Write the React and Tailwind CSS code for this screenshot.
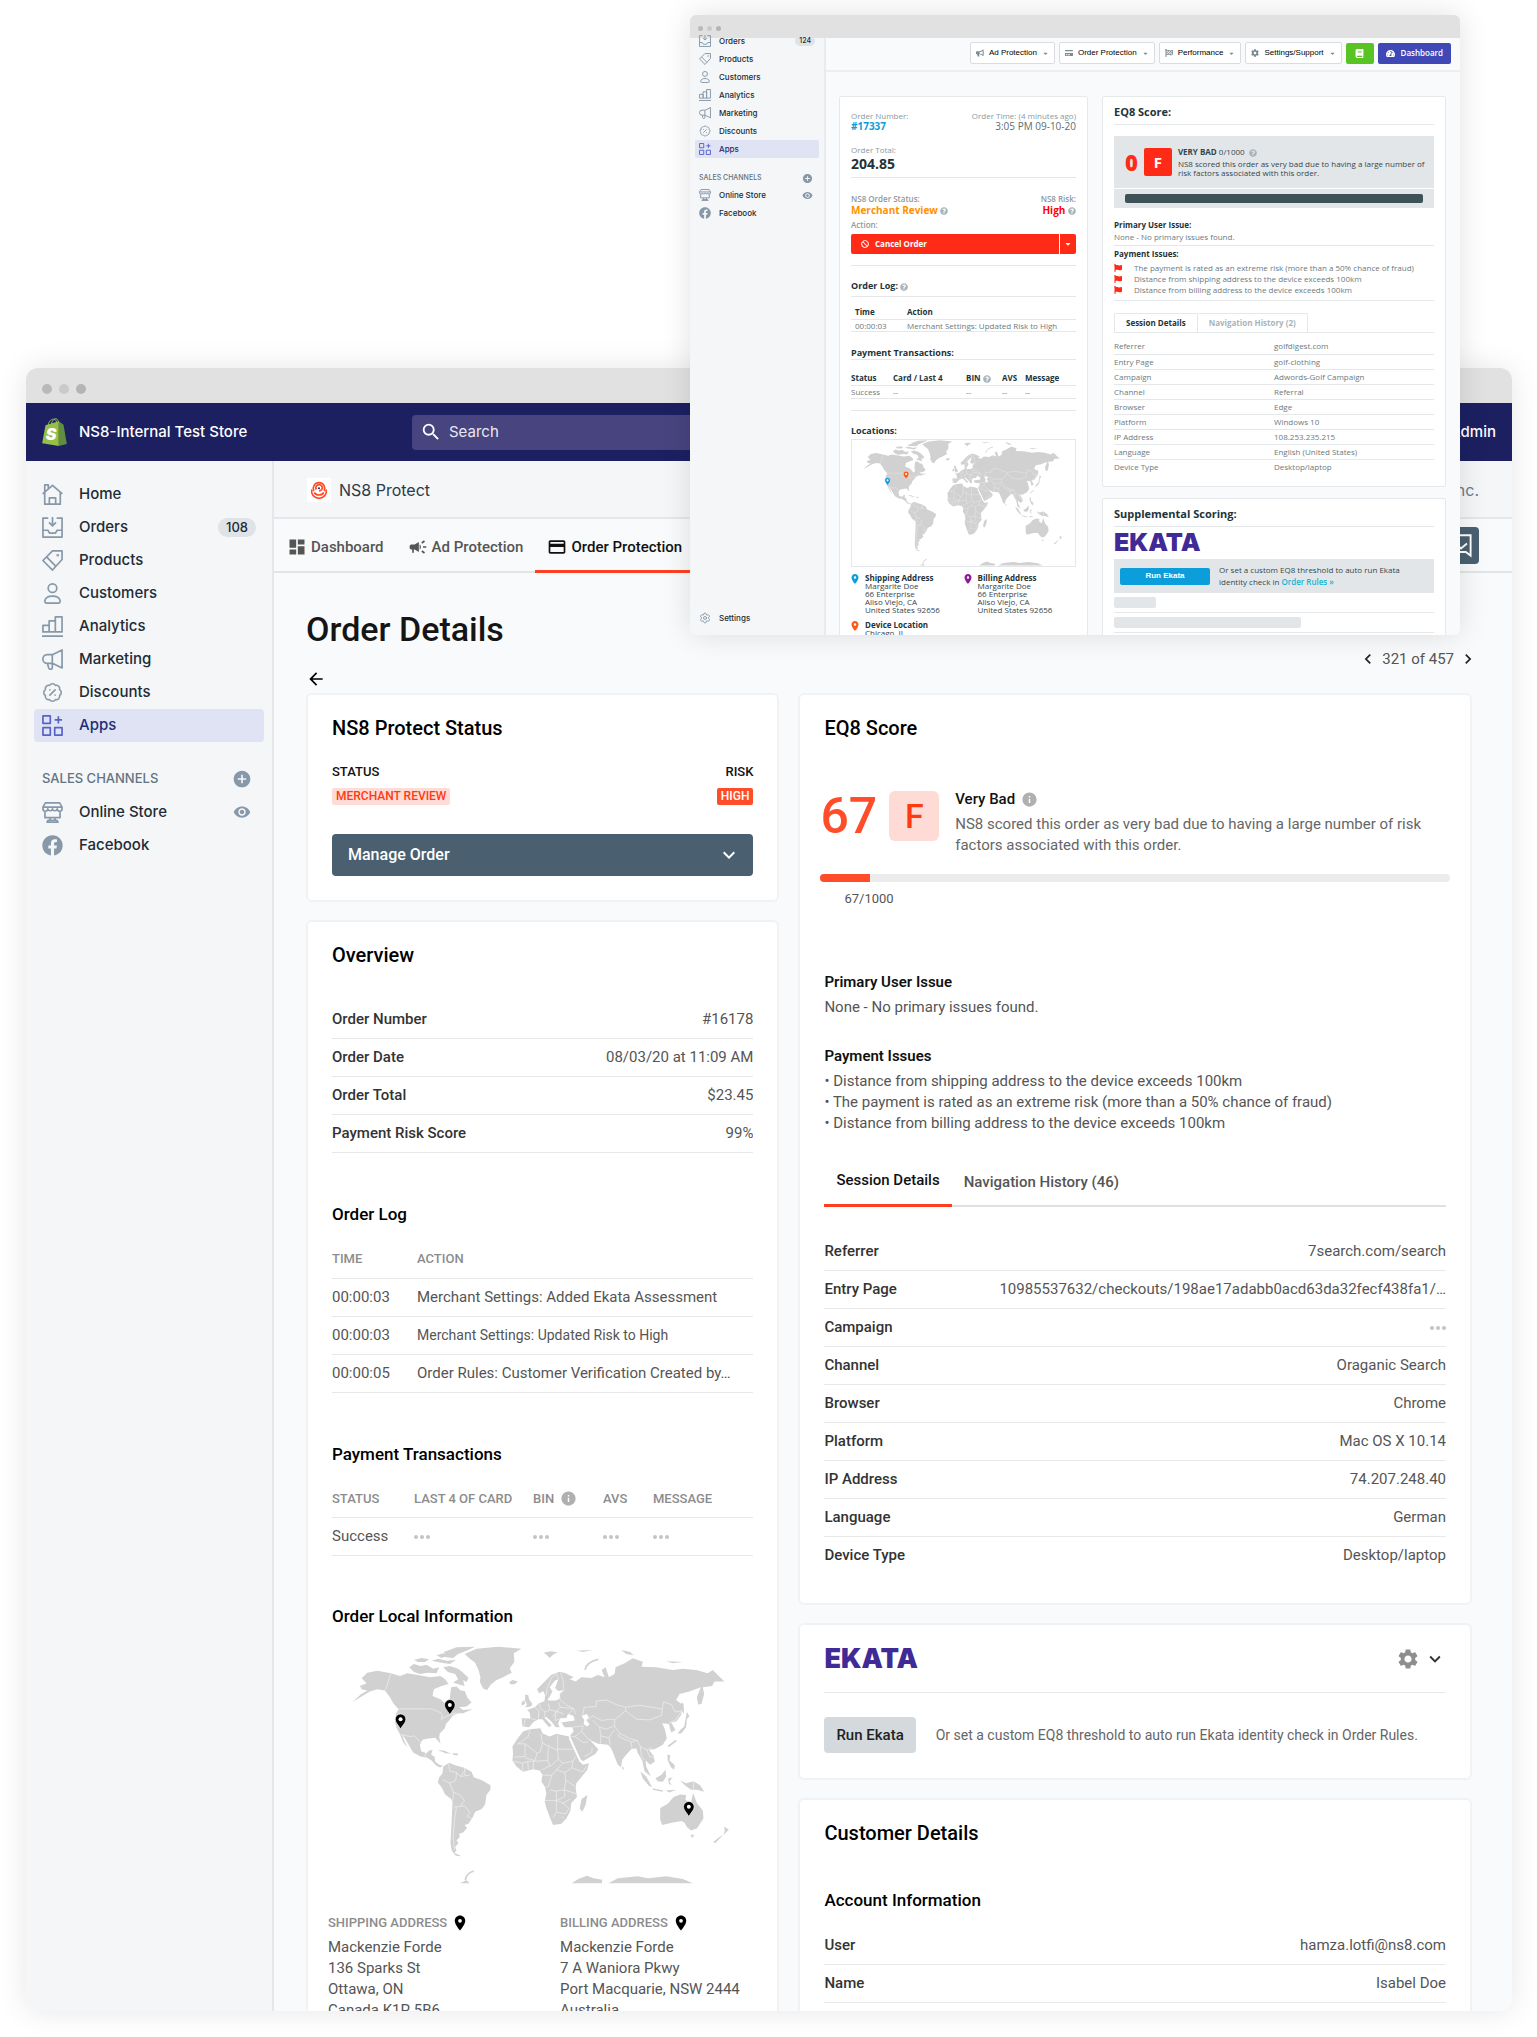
import React from "react";
import { BadgePercent, Settings } from "lucide-react";
import { FaFacebook, FaCog, FaFlag, FaBullhorn, FaTachometerAlt, FaBan, FaCaretDown, FaQuestionCircle, FaFlagCheckered, FaCreditCard, FaBook } from "react-icons/fa";
import {
  MdAddCircle, MdVisibility, MdDashboard, MdCampaign, MdPayment, MdArrowBack, MdInfo,
  MdSettings, MdKeyboardArrowDown, MdKeyboardArrowLeft, MdKeyboardArrowRight, MdLocationOn, MdSearch,
} from "react-icons/md";

const LineIcon = ({ className, children }) => (
  <svg viewBox="0 0 20 20" fill="none" stroke="currentColor" strokeWidth="1.6" strokeLinejoin="round" className={className} aria-hidden="true">
    {children}
  </svg>
);

const HomeIcon = ({ className }) => (
  <LineIcon className={className}>
    <path d="M2.6 8.4v10.8h14.8V8.4M.6 9.4 10 1.2l9.4 8.2M2.6 7.4V.9H6v3.4M7 19v-5.8h6V19" />
  </LineIcon>
);

const OrdersIcon = ({ className }) => (
  <LineIcon className={className}>
    <path d="M6 1H.9v18.1h18.2V1H14M1 12.6h4.6l1.6 2.8h5.6l1.6-2.8H19M10 0v8.2M6.7 5.2 10 8.4l3.3-3.2" />
  </LineIcon>
);

const ProductsIcon = ({ className }) => (
  <LineIcon className={className}>
    <path d="M10 .9h9.1V9L10 19.1.9 10zM4.4 6.6l8.8 9" />
    <circle cx="15" cy="5" r="0.5" />
  </LineIcon>
);

const CustomersIcon = ({ className }) => (
  <LineIcon className={className}>
    <circle cx="10" cy="4.9" r="4.1" />
    <path d="M2.7 17.2c.4-3 3.5-4.7 7.3-4.7s6.9 1.7 7.3 4.7c.1 1-.6 1.9-1.6 1.9H4.3c-1 0-1.7-.9-1.6-1.9z" />
  </LineIcon>
);

const AnalyticsIcon = ({ className }) => (
  <LineIcon className={className}>
    <path d="M.9 8.9h5.9v6.3H.9zM6.8 4.7h5.9v10.5H6.8zM12.7.9h6.4v14.3h-6.4zM0 19.1h20" />
  </LineIcon>
);

const MarketingIcon = ({ className }) => (
  <LineIcon className={className}>
    <path d="M19.1.9v17.2l-8.7-4.4H5a4.2 4.2 0 0 1 0-8.4h5.4zM9.8 5.3v12.5c0 .8-.5 1.3-1.2 1.3h-1c-.6 0-1-.4-1.2-1L5.2 13.7" />
  </LineIcon>
);

const AppsIcon = ({ className }) => (
  <LineIcon className={className}>
    <path d="M.9.9h7v7h-7zM.9 12.1h7v7h-7zM12.1 12.1h7v7h-7zM15.6 1.2v7M12.1 4.7h7" />
  </LineIcon>
);

const StoreIcon = ({ className }) => (
  <LineIcon className={className}>
    <path d="M3.2.9h13.6l2.3 4v1.6a2.3 2.3 0 0 1-4.6 0 2.3 2.3 0 0 1-4.5 0 2.3 2.3 0 0 1-4.5 0 2.3 2.3 0 0 1-4.6 0V4.9zM.9 4.9h18.2M2.8 8.8v6h14.4v-6M7.6 14.8v2.6M12.4 14.8v2.6M4.8 19.1c.2-1.2.8-1.7 1.8-1.7h6.8c1 0 1.6.5 1.8 1.7z" />
  </LineIcon>
);

const DiscountsIcon = ({ className }) => <BadgePercent strokeWidth={1.8} className={className} />;

const ShopifyLogo = () => (
  <svg viewBox="0 0 74 84" className="w-[25px] h-7 shrink-0" aria-hidden="true">
    <path d="M10 22 50 10 50 84 0 76z" fill="#95bf47" />
    <path d="M50 10 64 20 74 78 50 84z" fill="#5e8e3e" />
    <path d="M18 22C20 8 29 2 36 4s8 8 7 14M27 20C29 8 38-2 45 4c3 3 4 6 4 10" fill="none" stroke="#95bf47" strokeWidth="3" />
    <text x="11" y="66" fill="#fff" className="font-['Inter',sans-serif] font-black italic text-[48px]">S</text>
  </svg>
);

const Ns8Logo = () => (
  <svg viewBox="0 0 24 24" className="size-6 bg-white" fill="none" stroke="#ff4d29" strokeWidth="1.7" aria-hidden="true">
    <path d="M6.8 13A5.8 5.8 0 1 1 17.2 13" />
    <path d="M4.8 11.5C3.8 16 7 20.300 12 20.300s8.200-4.300 7.200-8.800" />
    <path d="M9.300 11.500A3.200 3.200 0 1 1 14.800 11.500c-.7 1-1.800 1.400-2.800 1.400M7.200 14.500c2 3.300 7.600 3.300 9.600 0" />
    <circle cx="12" cy="10.300" r="1" fill="#1c2260" stroke="none" />
  </svg>
);

const LAND =
  "M215 265 232 248 262 242 303 250 330 258 352 250 380 254 420 262 452 258 466 268 476 282 455 288 432 298 428 318 452 328 468 342 473 352 484 345 480 322 484 292 500 290 512 302 525 303 532 322 545 338 530 350 508 352 520 360 548 358 520 370 505 370 490 376 478 392 468 402 465 415 450 430 448 442 452 462 444 452 436 444 415 446 398 450 390 465 394 484 410 490 418 482 428 480 424 495 434 500 436 515 448 525 460 528 450 533 438 526 425 512 410 503 392 500 370 488 358 468 345 445 336 434 344 455 353 473 340 458 331 435 322 418 316 400 318 372 326 358 310 340 300 322 285 302 262 298 240 305 215 320 188 336 212 314 232 302 215 298 210 288 230 280z" +
  "M358 232 372 222 392 228 410 224 430 236 448 232 440 250 415 248 390 252 372 246zM372 210 395 204 418 208 405 216 385 216zM425 212 445 206 470 212 498 210 480 222 455 218zM440 196 460 190 472 198 455 204zM462 186 500 172 556 170 530 182 505 192 490 204 468 202zM460 232 480 228 505 236 520 248 536 264 530 276 520 270 524 288 508 284 490 278 505 268 496 252 474 246zM440 270 455 262 470 276 455 280z" +
  "M525 192 560 176 625 170 695 176 672 190 674 215 660 235 666 248 640 262 618 272 602 285 592 300 580 296 570 276 572 262 566 240 556 218 540 206zM658 277 668 270 684 275 676 282 664 284zM444 481 462 482 484 492 468 490zM488 490 506 491 502 497 490 495z" +
  "M460 530 478 519 496 526 523 534 545 546 552 562 578 572 602 586 602 600 590 616 586 644 576 658 556 666 548 684 536 702 524 706 532 714 520 728 508 732 510 742 500 752 506 760 496 772 500 782 494 790 516 800 498 798 486 784 482 760 484 720 486 680 488 640 484 628 466 614 456 594 444 578 448 562 458 550z" +
  "M700 425 720 418 752 415 758 430 780 440 800 432 838 440 845 455 858 485 870 515 880 525 898 520 893 540 875 562 860 580 858 595 862 622 845 640 842 664 830 686 815 702 790 706 780 682 770 655 765 635 770 610 765 590 755 575 758 555 750 542 730 538 700 546 680 530 668 512 670 490 668 470 682 448zM893 616 888 645 878 666 870 656 876 628z" +
  "M698 410 696 385 722 386 720 368 712 360 735 352 748 340 764 334 766 318 774 318 776 332 800 332 812 324 810 310 824 300 806 303 796 294 806 268 796 272 780 292 788 305 778 324 768 322 762 304 748 310 742 298 762 278 785 254 810 245 828 250 852 262 840 268 858 275 875 262 905 264 925 255 945 262 936 240 948 232 958 262 975 252 978 232 1005 220 1030 205 1060 215 1056 230 1100 232 1150 240 1180 236 1220 240 1255 250 1270 240 1305 275 1275 275 1268 288 1240 292 1244 312 1236 342 1226 344 1222 322 1234 292 1200 305 1170 312 1160 330 1180 345 1175 375 1160 395 1145 398 1158 420 1145 428 1138 402 1118 400 1126 418 1132 445 1120 465 1095 478 1078 480 1092 498 1096 515 1082 525 1068 512 1070 530 1084 560 1065 544 1058 512 1045 490 1040 475 1025 478 1010 495 998 510 994 532 984 524 974 498 964 474 955 465 925 462 900 450 926 478 918 492 880 514 870 506 858 478 845 452 842 436 852 425 848 412 825 412 815 398 855 392 852 378 835 372 830 384 812 385 805 400 810 412 798 412 785 395 768 380 765 384 786 406 778 412 758 388 745 388 730 398 718 412z" +
  "M706 314 716 316 718 328 728 342 724 350 706 352 712 344 706 332zM695 338 704 330 706 342 696 347zM762 188 782 184 804 187 790 194 780 204 772 196zM1192 366 1200 378 1192 388 1190 412 1176 430 1164 432 1172 420 1184 410 1188 388zM1176 336 1182 342 1184 372 1176 362zM995 180 1022 186 1032 196 1010 192zM1130 214 1180 216 1150 220zM860 182 910 180 880 186z" +
  "M1052 545 1070 560 1088 592 1078 588 1060 566zM1088 595 1122 602 1118 606 1090 600zM1098 565 1116 555 1128 540 1130 560 1120 576 1104 574zM1136 566 1150 562 1140 574 1146 586 1138 582zM1172 572 1190 580 1212 574 1232 586 1244 606 1222 600 1205 600 1186 586zM1134 494 1142 496 1140 512 1156 526 1154 540 1144 532 1134 510zM996 530 1003 534 1000 542zM1128 602 1160 600 1140 608z" +
  "M1112 655 1135 642 1152 622 1172 614 1190 616 1188 630 1204 640 1211 610 1222 640 1240 662 1242 686 1222 716 1205 722 1192 712 1186 700 1176 694 1150 698 1118 706 1112 690zM1203 735 1215 735 1208 745zM1304 710 1318 720 1302 736 1306 724zM1302 734 1278 760 1271 757 1290 742z" +
  "M846 881 866 868 892 858 912 866 938 870 936 881zM956 881 985 866 1045 860 1075 866 1130 860 1180 868 1210 881zM510 881 530 872 540 881z";

const BORDERS =
  "M303 250 287 300M320 357H425L452 368 458 376 454 388 472 378 500 368M333 434 360 440 374 438 392 458M408 490 404 500" +
  "M476 522 480 544 500 548 512 560 526 540M500 548 498 572 480 580 460 570M512 560 540 556M524 534 526 556M480 580 490 606 512 616 524 634 510 650 492 652M492 606 488 636M510 650 524 648 540 668 532 680 546 686M500 652 494 690 490 740 494 780" +
  "M720 418 716 440 684 462M684 462 706 462 706 500 672 502M706 462 742 490 752 486 758 460 754 432M742 490 736 512 706 504M758 460 776 468 804 482V436M804 478H850M776 468 774 512 740 514M804 482 806 508 786 526 756 540M774 512 780 528M806 508 820 520 850 514 858 500M850 514 846 534 880 546 890 530M820 520 800 540 826 548 846 534M826 548 828 572 858 590M756 556H786L800 540M786 556 776 590 766 594M828 572 824 600 800 604 780 600M824 600 860 612M824 600 826 620 800 632H766M800 604 800 668 790 684M800 632 820 640 842 628M820 640 838 656 828 672 802 668M700 546 698 520 672 514M716 540 714 514M730 538 732 514M698 520 720 514 740 514M816 682 822 684" +
  "M702 412 706 388M722 386 740 390M735 352 748 362 746 386M748 340 752 356 766 366 780 360 800 364 812 352 806 336M766 366 764 380M780 360 776 340M790 380 800 364 822 372M800 364 796 392 812 386M812 352 850 356 838 372M806 268 800 250 786 262 772 296 770 316M812 248 820 270 822 300M820 304 806 318 812 330 830 345 852 356 858 372" +
  "M878 378 884 352 920 350 920 334 950 330 980 344 1008 352 1008 362 976 390 960 388 936 392 908 378 896 388M1008 352 1050 346 1100 354 1118 358 1116 376 1080 390 1040 388 1008 362M1118 358 1122 336 1146 344 1156 366 1178 362 1158 390 1138 400M976 390 974 408 990 430 1020 446 1044 452 1052 470 1072 480 1086 474M974 408 950 418 930 412 910 392M930 412 934 438 958 444 974 420M934 438 932 462M958 444 962 466M848 412 880 408 876 424 892 444 904 452M876 424 856 440 846 440M856 440 880 458 896 456M884 500 906 488 908 474M990 430 986 440 1024 456 1044 452M1024 456 1028 478M1052 470 1056 500 1066 512M1072 480 1080 500 1092 502M1212 576V600";

const PIN = "M0 0C-9-14-16-20-16-29A16 16 0 1 1 16-29C16-20 9-14 0 0z";

function WorldMap({ pins, className }) {
  return (
    <svg viewBox="126 168 1266 714" className={className} aria-hidden="true">
      <path d={LAND} fill="#d1d1d1" />
      <path d="M886 240Q890 216 926 208M526 872Q530 850 552 844M1160 452 1136 470" fill="none" stroke="#d1d1d1" strokeWidth="5" />
      <path d={BORDERS} fill="none" stroke="#f1f1f1" strokeWidth="2" strokeLinejoin="round" />
      <path d="M876 378 892 372 898 384 890 390 900 404 892 410 882 402 884 390z" fill="#fff" />
      <path d="M840 444 872 514" stroke="#fff" strokeWidth="6" />
      {pins.map((p, i) => (
        <g key={i} transform={`translate(${p.x} ${p.y})`}>
          <path d={PIN} fill={p.color} stroke="#fff" strokeWidth="2" />
          <circle cx="0" cy="-29" r="6" fill="#fff" />
        </g>
      ))}
    </svg>
  );
}

const NAV = [
  { label: "Home", icon: HomeIcon },
  { label: "Orders", icon: OrdersIcon, count: true },
  { label: "Products", icon: ProductsIcon },
  { label: "Customers", icon: CustomersIcon },
  { label: "Analytics", icon: AnalyticsIcon },
  { label: "Marketing", icon: MarketingIcon },
  { label: "Discounts", icon: DiscountsIcon },
  { label: "Apps", icon: AppsIcon, active: true },
];

function Sidebar() {
  return (
    <aside className="w-[248px] shrink-0 bg-[#f4f6f8] border-r-2 border-[#e4e7eb] pt-[17px] pl-2 pr-2 font-['Inter',sans-serif] text-[15px] font-medium text-[#212b36]">
      <nav>
        {NAV.map(({ label, icon: Icon, count, active }) => (
          <a key={label} href="#" className={active ? "flex items-center h-[33px] px-2 rounded bg-[#dfe3f3] text-[#202e78]" : "flex items-center h-[33px] px-2"}>
            <Icon className={active ? "size-[21px] mr-4 text-[#5563c9]" : "size-[21px] mr-4 text-[#8798a8]"} />
            {label}
            {count && <span className="ml-auto h-[19px] px-2 rounded-full bg-[#dfe3e8] text-[13px] leading-[19px]">108</span>}
          </a>
        ))}
      </nav>
      <div className="flex items-center justify-between h-8 mt-[21px] px-2 text-[13px] text-[#637381]">
        <h2>SALES CHANNELS</h2>
        <button aria-label="Add sales channel" className="mr-1 text-[#8798a8]"><MdAddCircle className="size-5" /></button>
      </div>
      <a href="#" className="flex items-center h-[34px] px-2">
        <StoreIcon className="size-[21px] mr-4 text-[#8798a8]" />
        Online Store
        <MdVisibility className="size-[18px] ml-auto mr-[5px] text-[#8798a8]" />
      </a>
      <a href="#" className="flex items-center h-[33px] px-2">
        <FaFacebook className="size-[21px] mr-4 text-[#8798a8]" />
        Facebook
      </a>
    </aside>
  );
}

const Card = ({ className = "", children }) => (
  <section className={`bg-white border-2 border-[#f0f2f4] rounded-md px-6 ${className}`}>{children}</section>
);

const Dots = () => (
  <svg viewBox="0 0 16 4" className="inline-block w-4 h-1" role="img" aria-label="No value">
    <circle cx="2" cy="2" r="2" fill="#c4c4c4" />
    <circle cx="8" cy="2" r="2" fill="#c4c4c4" />
    <circle cx="14" cy="2" r="2" fill="#c4c4c4" />
  </svg>
);

function KeyValueTable({ rows, lastBorder = true }) {
  return (
    <table className="w-full table-fixed">
      <tbody>
        {rows.map(([k, v]) => (
          <tr key={k} className={lastBorder ? "h-[38px] border-b border-[#e8e8e8]" : "h-[38px] border-b border-[#e8e8e8] last:border-0"}>
            <th scope="row" className="w-1/4 text-left font-medium text-[#333] whitespace-nowrap">{k}</th>
            <td className="text-right text-[#555] truncate">{v || <Dots />}</td>
          </tr>
        ))}
      </tbody>
    </table>
  );
}

const OVERVIEW = [
  ["Order Number", "#16178"],
  ["Order Date", "08/03/20 at 11:09 AM"],
  ["Order Total", "$23.45"],
  ["Payment Risk Score", "99%"],
];

const ORDER_LOG = [
  { time: "00:00:03", action: "Merchant Settings: Added Ekata Assessment" },
  { time: "00:00:03", action: "Merchant Settings: Updated Risk to High", small: true },
  { time: "00:00:05", action: "Order Rules: Customer Verification Created by…" },
];

const SESSION = [
  ["Referrer", "7search.com/search"],
  ["Entry Page", "10985537632/checkouts/198ae17adabb0acd63da32fecf438fa1/…"],
  ["Campaign", ""],
  ["Channel", "Oraganic Search"],
  ["Browser", "Chrome"],
  ["Platform", "Mac OS X 10.14"],
  ["IP Address", "74.207.248.40"],
  ["Language", "German"],
  ["Device Type", "Desktop/laptop"],
];

const ADDRESSES = [
  { title: "SHIPPING ADDRESS", lines: ["Mackenzie Forde", "136 Sparks St", "Ottawa, ON", "Canada K1P 5B6"] },
  { title: "BILLING ADDRESS", lines: ["Mackenzie Forde", "7 A Waniora Pkwy", "Port Macquarie, NSW 2444", "Australia"] },
];

const LOCAL_PINS = [
  { x: 332, y: 417, color: "#000" },
  { x: 480, y: 374, color: "#000" },
  { x: 1198, y: 680, color: "#000" },
];

function OverviewCard() {
  const head = "h-[38px] text-left font-medium text-[13px] text-[#8c8c8c]";
  return (
    <Card className="pt-[19px]">
      <h2 className="text-xl leading-7 font-medium text-black">Overview</h2>
      <div className="mt-8"><KeyValueTable rows={OVERVIEW} /></div>

      <h3 className="mt-[49px] text-[17px] leading-6 font-medium text-black">Order Log</h3>
      <table className="w-full table-fixed mt-[14px]">
        <thead>
          <tr className="border-b border-[#e8e8e8]">
            <th className={`${head} w-[85px]`}>TIME</th>
            <th className={head}>ACTION</th>
          </tr>
        </thead>
        <tbody>
          {ORDER_LOG.map((row, i) => (
            <tr key={i} className="h-[38px] border-b border-[#e8e8e8]">
              <td>{row.time}</td>
              <td className={row.small ? "truncate text-sm" : "truncate"}>{row.action}</td>
            </tr>
          ))}
        </tbody>
      </table>

      <h3 className="mt-[49px] text-[17px] leading-6 font-medium text-black">Payment Transactions</h3>
      <table className="w-full table-fixed mt-[14px]">
        <thead>
          <tr className="border-b border-[#e8e8e8] whitespace-nowrap">
            <th className={`${head} w-[82px]`}>STATUS</th>
            <th className={`${head} w-[119px]`}>LAST 4 OF CARD</th>
            <th className={`${head} w-[70px]`}>
              <span className="flex items-center gap-1.5">BIN <MdInfo className="size-[17px] text-[#b0b0b0]" /></span>
            </th>
            <th className={`${head} w-[50px]`}>AVS</th>
            <th className={head}>MESSAGE</th>
          </tr>
        </thead>
        <tbody>
          <tr className="h-[38px] border-b border-[#e8e8e8]">
            <td>Success</td>
            <td><Dots /></td>
            <td><Dots /></td>
            <td><Dots /></td>
            <td><Dots /></td>
          </tr>
        </tbody>
      </table>

      <h3 className="mt-12 text-[17px] leading-6 font-medium text-black">Order Local Information</h3>
      <WorldMap pins={LOCAL_PINS} className="w-full mt-[18px]" />
      <div className="grid grid-cols-[6fr_5fr] mt-[25px] -ml-1">
        {ADDRESSES.map((a) => (
          <address key={a.title} className="not-italic leading-[21px] whitespace-nowrap">
            <div className="flex items-center gap-1 h-7 text-[13px] font-medium text-[#8c8c8c]">
              {a.title}
              <MdLocationOn className="size-[18px] text-black" />
            </div>
            {a.lines.map((l) => <p key={l}>{l}</p>)}
          </address>
        ))}
      </div>
    </Card>
  );
}

function ScoreCard() {
  return (
    <Card className="pt-[19px] pb-[29px]">
      <h2 className="text-xl leading-7 font-medium text-black">EQ8 Score</h2>
      <div className="flex items-start mt-[49px] -ml-1">
        <div className="text-[50px] leading-[50px] font-medium text-[#ff4d29]">67</div>
        <div className="flex items-center justify-center size-[50px] ml-3 rounded-md bg-[#ffdbd5] text-[34px] font-medium text-[#ff3a12]">F</div>
        <div className="flex-1 ml-4 leading-[21px] text-[#666]">
          <p className="flex items-center gap-1.5 mb-1.5 leading-[17px] font-medium text-[#111]">
            Very Bad <MdInfo className="size-[17px] text-[#b0b0b0]" />
          </p>
          <p>NS8 scored this order as very bad due to having a large number of risk factors associated with this order.</p>
        </div>
      </div>
      <div className="h-2 mt-[18px] -mx-1 rounded-full bg-[#ececec] overflow-hidden">
        <div className="h-full bg-[#ff4d29]" style={{ width: "7.8%" }} />
      </div>
      <p className="mt-[9px] ml-5 text-[13px] leading-4">67/1000</p>

      <h3 className="mt-[65px] text-[15px] leading-[21px] font-semibold text-[#111]">Primary User Issue</h3>
      <p className="mt-1 leading-[21px]">None - No primary issues found.</p>
      <h3 className="mt-7 text-[15px] leading-[21px] font-semibold text-[#111]">Payment Issues</h3>
      <ul className="mt-1 leading-[21px]">
        <li>• Distance from shipping address to the device exceeds 100km</li>
        <li>• The payment is rated as an extreme risk (more than a 50% chance of fraud)</li>
        <li>• Distance from billing address to the device exceeds 100km</li>
      </ul>

      <div role="tablist" className="flex mt-[23px] border-b-2 border-[#e0e0e0] font-medium">
        <button role="tab" aria-selected="true" className="h-[50px] -mb-0.5 px-3 border-b-3 border-[#ff4020] text-[#111]">Session Details</button>
        <button role="tab" aria-selected="false" className="h-[50px] -mb-0.5 px-3">Navigation History (46)</button>
      </div>
      <div className="mt-[25px]"><KeyValueTable rows={SESSION} lastBorder={false} /></div>
    </Card>
  );
}

function MainWindow() {
  return (
    <div className="flex flex-col h-full rounded-xl overflow-hidden bg-[#f9fafb] shadow-[0_0_30px_rgba(0,0,0,0.1)] font-['Roboto',sans-serif] text-[15px] text-[#555]">
      <div className="flex items-center gap-[7px] h-[35px] shrink-0 pt-1.5 pl-4 bg-[#e1e1e1]">
        <span className="size-2.5 rounded-full bg-[#b9b9b9]" />
        <span className="size-2.5 rounded-full bg-[#cacaca]" />
        <span className="size-2.5 rounded-full bg-[#b4b4b4]" />
      </div>
      <header className="flex items-center h-[58px] shrink-0 px-4 bg-[#1c2061] text-white font-['Inter',sans-serif] text-[15px] font-medium">
        <ShopifyLogo />
        <span className="ml-3 w-[333px]">NS8-Internal Test Store</span>
        <label className="flex items-center flex-1 max-w-[700px] h-[35px] px-2 rounded bg-[#47447f]">
          <MdSearch className="size-[22px]" />
          <input type="search" aria-label="Search" placeholder="Search" className="flex-1 ml-[7px] bg-transparent font-normal placeholder:text-[#e8e8f2] outline-none" />
        </label>
        <span className="ml-auto">Admin</span>
      </header>
      <div className="flex flex-1 min-h-0">
        <Sidebar />
        <main className="flex-1 min-w-0">
          <div className="flex items-center h-[58px] pt-0.5 pl-[33px] pr-[33px] bg-[#f4f6f8] border-b-2 border-[#e4e7eb] font-['Inter',sans-serif] text-base text-[#2e3a47]">
            <Ns8Logo />
            <span className="ml-2">NS8 Protect</span>
            <span className="ml-auto text-[#6b7a88]">by NS8 Inc.</span>
          </div>
          <nav className="flex h-[54px] pl-px pr-[33px] border-b-2 border-[#e2e4e6] font-medium">
            <a href="#" className="flex items-center gap-1 h-[54px] px-3 pt-0.5"><MdDashboard className="size-5 text-[#555]" />Dashboard</a>
            <a href="#" className="flex items-center gap-1 h-[54px] px-3 pt-0.5"><MdCampaign className="size-5 text-[#555]" />Ad Protection</a>
            <a href="#" className="flex items-center gap-1 h-[54px] px-3 pt-[5px] border-b-3 border-[#ff4020] text-[#111]"><MdPayment className="size-5" />Order Protection</a>
            <button aria-label="Bookmark" className="flex items-center justify-center size-[37px] mt-2 ml-auto rounded bg-[#4a6070]">
              <svg viewBox="0 0 20 20" className="size-6" fill="none" stroke="#fff" strokeWidth="1.6" aria-hidden="true">
                <path d="M2 1h16v17l-4-3H2zM6 8l4 4 5-4" />
              </svg>
            </button>
          </nav>
          <div className="pl-8 pr-10 pt-9">
            <h1 className="text-[34px] leading-10 font-medium text-[#151515]">Order Details</h1>
            <div className="flex items-center justify-end h-5 -mr-1.5 text-[15px]">
              <button aria-label="Previous order"><MdKeyboardArrowLeft className="size-5 text-[#222]" /></button>
              <span className="mx-1">321 of 457</span>
              <button aria-label="Next order"><MdKeyboardArrowRight className="size-5 text-[#222]" /></button>
            </div>
            <button aria-label="Back" className="block"><MdArrowBack className="size-5 text-black" /></button>
            <div className="grid grid-cols-[473fr_673fr] gap-[19px] mt-1">
              <div className="flex flex-col gap-[18px] min-w-0">
                <Card className="pt-[19px] pb-6">
                  <h2 className="text-xl leading-7 font-medium text-black">NS8 Protect Status</h2>
                  <div className="flex justify-between mt-5 text-[13px] font-medium text-[#111]">
                    <div>
                      <h3 className="leading-5">STATUS</h3>
                      <span className="inline-block mt-1.5 px-1 rounded-xs bg-[#ffdbd5] text-xs leading-[17px] text-[#ff3a12]">MERCHANT REVIEW</span>
                    </div>
                    <div className="text-right">
                      <h3 className="leading-5">RISK</h3>
                      <span className="inline-block mt-1.5 px-1 rounded-xs bg-[#ff4d29] text-xs leading-[17px] text-white">HIGH</span>
                    </div>
                  </div>
                  <button className="flex items-center justify-between w-full h-[42px] mt-7 pl-4 pr-3 rounded bg-[#4a6070] text-base font-medium text-white">
                    Manage Order <MdKeyboardArrowDown className="size-6" />
                  </button>
                </Card>
                <OverviewCard />
              </div>
              <div className="flex flex-col gap-[18px] min-w-0">
                <ScoreCard />
                <Card className="pt-[19px] pb-[25px]">
                  <div className="flex items-center h-[30px]">
                    <span className="font-['Inter',sans-serif] text-[27px] leading-7 font-black text-[#3f2a96]">EKATA</span>
                    <button aria-label="Ekata settings" className="ml-auto"><MdSettings className="size-6 text-[#8e8e8e]" /></button>
                    <button aria-label="Collapse Ekata" className="ml-1"><MdKeyboardArrowDown className="size-[22px] text-[#333]" /></button>
                  </div>
                  <div className="flex items-center gap-5 mt-[18px] pt-6 border-t border-[#e8e8e8]">
                    <button className="h-9 px-3 rounded bg-[#d4d9de] font-medium text-[#222] whitespace-nowrap">Run Ekata</button>
                    <p className="text-sm text-[#666]">Or set a custom EQ8 threshold to auto run Ekata identity check in Order Rules.</p>
                  </div>
                </Card>
                <Card className="pt-[19px] pb-10">
                  <h2 className="text-xl leading-7 font-medium text-black">Customer Details</h2>
                  <h3 className="mt-[41px] mb-[14px] text-[17px] leading-6 font-medium text-black">Account Information</h3>
                  <KeyValueTable rows={[["User", "hamza.lotfi@ns8.com"], ["Name", "Isabel Doe"]]} />
                </Card>
              </div>
            </div>
          </div>
        </main>
      </div>
    </div>
  );
}

/* Previous version of the order screen, shown on top of the new one */

const MINI_MENUS = [
  { label: "Ad Protection", icon: FaBullhorn },
  { label: "Order Protection", icon: FaCreditCard },
  { label: "Performance", icon: FaFlagCheckered },
  { label: "Settings/Support", icon: FaCog },
];

const MINI_SESSION = [
  ["Referrer", "golfdigest.com"],
  ["Entry Page", "golf-clothing"],
  ["Campaign", "Adwords-Golf Campaign"],
  ["Channel", "Referral"],
  ["Browser", "Edge"],
  ["Platform", "Windows 10"],
  ["IP Address", "108.253.235.215"],
  ["Language", "English (United States)"],
  ["Device Type", "Desktop/laptop"],
];

const MINI_ADDRESSES = [
  { title: "Shipping Address", color: "text-[#0c9ddb]", lines: ["Margarite Doe", "66 Enterprise", "Aliso Viejo, CA", "United States 92656"] },
  { title: "Billing Address", color: "text-[#8d1a94]", lines: ["Margarite Doe", "66 Enterprise", "Aliso Viejo, CA", "United States 92656"] },
  { title: "Device Location", color: "text-[#ff5a12]", lines: ["Chicago, IL"] },
];

const MINI_PINS = [
  { x: 328, y: 426, color: "#0c9ddb" },
  { x: 433, y: 390, color: "#ff5a12" },
];

function MiniSidebar() {
  return (
    <aside className="flex flex-col w-[136px] shrink-0 bg-[#f4f6f8] border-r-2 border-[#e8ebef] px-[5px] pb-2 font-['Inter',sans-serif] text-[8px] font-medium text-[#212b36]">
      <nav className="-mt-1.5">
        {NAV.slice(1).map(({ label, icon: Icon, count, active }) => (
          <a key={label} href="#" className={active ? "flex items-center h-[18px] px-1 rounded-xs bg-[#dfe3f3] text-[#202e78]" : "flex items-center h-[18px] px-1"}>
            <Icon className={active ? "size-3 mr-2 text-[#5563c9]" : "size-3 mr-2 text-[#8798a8]"} />
            {label}
            {count && <span className="ml-auto px-1 rounded-full bg-[#dfe3e8] text-[7px] leading-[10px]">124</span>}
          </a>
        ))}
      </nav>
      <div className="flex items-center justify-between h-4 mt-3 px-1 text-[7px] text-[#637381]">
        <h2>SALES CHANNELS</h2>
        <MdAddCircle className="size-[11px] mr-0.5 text-[#8798a8]" />
      </div>
      <a href="#" className="flex items-center h-[18px] px-1">
        <StoreIcon className="size-3 mr-2 text-[#8798a8]" />
        Online Store
        <MdVisibility className="size-[11px] ml-auto mr-0.5 text-[#8798a8]" />
      </a>
      <a href="#" className="flex items-center h-[18px] px-1">
        <FaFacebook className="size-3 mr-2 text-[#8798a8]" />
        Facebook
      </a>
      <a href="#" className="flex items-center h-[18px] mt-auto px-1">
        <Settings strokeWidth={1.8} className="size-3 mr-2 text-[#8798a8]" />
        Settings
      </a>
    </aside>
  );
}

const Help = () => <FaQuestionCircle className="inline-block size-2 text-[#a9b4ba]" />;

function MiniOrderCard() {
  return (
    <section className="w-[249px] bg-white border border-[#e6e9ec] rounded-xs px-[11px] pt-[14px]">
      <div className="flex justify-between leading-[10px] text-[#8c999e]">
        <div>
          <p>Order Number:</p>
          <a href="#" className="block text-[10px] font-bold text-[#0c9ddb]">#17337</a>
        </div>
        <div className="text-right">
          <p>Order Time: (4 minutes ago)</p>
          <p className="text-[10px] text-[#5d6d73]">3:05 PM 09-10-20</p>
        </div>
      </div>
      <p className="mt-3.5 leading-[10px] text-[#8c999e]">Order Total:</p>
      <p className="pb-1 text-[14px] leading-[18px] font-bold text-[#22343a] border-b border-[#e4e8ea]">204.85</p>

      <div className="flex justify-between mt-4 leading-[10px] font-semibold text-[#8c999e]">
        <div>
          <p>NS8 Order Status:</p>
          <p className="text-[10px] leading-3 font-bold text-[#ff9100]">Merchant Review <Help /></p>
          <p className="mt-1">Action:</p>
        </div>
        <div className="text-right">
          <p>NS8 Risk:</p>
          <p className="text-[10px] leading-3 font-bold text-[#f00]">High <Help /></p>
        </div>
      </div>
      <div className="flex gap-px mt-1 h-5 text-white font-bold">
        <button className="flex items-center flex-1 pl-2.5 gap-1.5 rounded-l-xs bg-[#ff2b17]"><FaBan />Cancel Order</button>
        <button aria-label="More actions" className="flex items-center justify-center w-4 rounded-r-xs bg-[#ff2b17]"><FaCaretDown /></button>
      </div>

      <h3 className="mt-[11px] pt-3.5 pb-1 text-[9px] leading-3 font-bold text-[#22343a] border-y border-[#e4e8ea]">Order Log: <Help /></h3>
      <table className="w-full mt-2 leading-[11px]">
        <thead>
          <tr className="h-3.5 text-left text-[#22343a] border-b border-[#e4e8ea]">
            <th className="w-[56px] pl-1 font-bold">Time</th>
            <th className="font-bold">Action</th>
          </tr>
        </thead>
        <tbody>
          <tr className="border-b border-[#e4e8ea]">
            <td className="pl-1">00:00:03</td>
            <td>Merchant Settings: Updated Risk to High</td>
          </tr>
        </tbody>
      </table>

      <h3 className="mt-[15px] text-[9px] leading-3 font-bold text-[#22343a] border-b border-[#e4e8ea]">Payment Transactions:</h3>
      <table className="w-full table-fixed mt-3 leading-[12px]">
        <thead>
          <tr className="h-3.5 text-left text-[#22343a] whitespace-nowrap border-b border-[#e4e8ea]">
            <th className="w-[42px] font-bold">Status</th>
            <th className="w-[73px] font-bold">Card / Last 4</th>
            <th className="w-9 font-bold">BIN <Help /></th>
            <th className="w-[23px] font-bold">AVS</th>
            <th className="font-bold">Message</th>
          </tr>
        </thead>
        <tbody>
          <tr className="border-b border-[#e4e8ea]">
            <td>Success</td>
            <td>--</td>
            <td>--</td>
            <td>--</td>
            <td>--</td>
          </tr>
        </tbody>
      </table>

      <h3 className="mt-[11px] pt-3.5 pb-0.5 text-[9px] leading-3 font-bold text-[#22343a] border-t border-[#e4e8ea]">Locations:</h3>
      <div className="border border-[#e4e8ea]">
        <WorldMap pins={MINI_PINS} className="w-full" />
      </div>
      <div className="grid grid-cols-2 mt-1.5 gap-y-1.5 leading-[8px] text-[#33464c]">
        {MINI_ADDRESSES.map((a) => (
          <address key={a.title} className="flex gap-1 not-italic whitespace-nowrap">
            <MdLocationOn className={`size-3 -ml-0.5 ${a.color}`} />
            <div>
              <p className="font-bold text-[#22343a] leading-[9px]">{a.title}</p>
              {a.lines.map((l) => <p key={l}>{l}</p>)}
            </div>
          </address>
        ))}
      </div>
    </section>
  );
}

function MiniScoreCards() {
  return (
    <div className="flex flex-col gap-[11px] flex-1 min-w-0">
      <section className="bg-white border border-[#e6e9ec] rounded-xs px-[11px] pt-[7px] pb-3">
        <h2 className="pb-1 text-[11px] leading-4 font-bold text-[#22343a] border-b border-[#e4e8ea]">EQ8 Score:</h2>
        <div className="flex items-center h-[52px] mt-[11px] pl-[11px] bg-[#e3e6e9]">
          <span className="text-[22px] font-extrabold text-[#ff2b17]">0</span>
          <span className="flex items-center justify-center size-7 shrink-0 ml-1.5 rounded-xs bg-[#ff2b17] text-[15px] font-bold text-white">F</span>
          <div className="ml-1.5 pr-1 leading-[9px] text-[#33464c]">
            <p className="mb-0.5"><b>VERY BAD</b> 0/1000 &nbsp;<Help /></p>
            <p>NS8 scored this order as very bad due to having a large number of risk factors associated with this order.</p>
          </div>
        </div>
        <div className="mt-px px-[11px] py-[5px] bg-[#e3e6e9]">
          <div className="h-[9px] rounded-xs bg-[#3e5157]" />
        </div>
        <h3 className="mt-[11px] leading-3 font-bold text-[#22343a]">Primary User Issue:</h3>
        <p className="pb-0.5 leading-3 border-b border-[#e4e8ea]">None - No primary issues found.</p>
        <h3 className="mt-0.5 leading-3 font-bold text-[#22343a]">Payment Issues:</h3>
        <ul className="pt-0.5 pb-[5px] leading-[11px] border-b border-[#e4e8ea]">
          {[
            "The payment is rated as an extreme risk (more than a 50% chance of fraud)",
            "Distance from shipping address to the device exceeds 100km",
            "Distance from billing address to the device exceeds 100km",
          ].map((t) => (
            <li key={t} className="flex items-center gap-3"><FaFlag className="size-2 text-[#ff2b17]" />{t}</li>
          ))}
        </ul>
        <div role="tablist" className="flex mt-3 h-5 border-b border-[#e4e8ea] font-bold">
          <button role="tab" aria-selected="true" className="px-[11px] border border-b-0 border-[#e4e8ea] rounded-t-xs text-[#22343a]">Session Details</button>
          <button role="tab" aria-selected="false" className="px-[11px] border-t border-r border-[#e4e8ea] rounded-t-xs text-[#a9b4ba]">Navigation History (2)</button>
        </div>
        <table className="w-full mt-1.5 leading-3">
          <tbody>
            {MINI_SESSION.map(([k, v]) => (
              <tr key={k} className="h-[15px] border-b border-[#e4e8ea] last:border-0">
                <th scope="row" className="w-1/2 text-left font-normal">{k}</th>
                <td>{v}</td>
              </tr>
            ))}
          </tbody>
        </table>
      </section>
      <section className="bg-white border border-[#e6e9ec] rounded-xs px-[11px] pt-[7px] pb-3">
        <h2 className="pb-1 text-[11px] leading-4 font-bold text-[#22343a] border-b border-[#e4e8ea]">Supplemental Scoring:</h2>
        <p className="mt-[5px] font-['Inter',sans-serif] text-[25px] leading-5 font-black text-[#3f2a96]">EKATA</p>
        <div className="flex items-center gap-[9px] mt-[7px] h-[34px] px-[6px] bg-[#e3e6e9]">
          <button className="w-[90px] h-[17px] rounded-xs bg-[#0c9ddb] font-['Liberation_Sans',sans-serif] font-bold text-white">Run Ekata</button>
          <p className="w-[190px] leading-3 text-[#33464c]">
            Or set a custom EQ8 threshold to auto run Ekata identity check in <a href="#" className="font-semibold text-[#12b5d4]">Order Rules »</a>
          </p>
        </div>
        <div className="mt-1 w-[42px] h-[11px] rounded-xs bg-[#e3e6e9]" />
        <div className="mt-1 pt-1 pb-1 border-y border-[#e4e8ea]">
          <div className="w-[187px] h-[11px] rounded-xs bg-[#e3e6e9]" />
        </div>
      </section>
    </div>
  );
}

function MiniWindow() {
  return (
    <div className="flex flex-col h-full rounded-md overflow-hidden bg-[#f9fafb] shadow-[0_0_30px_rgba(0,0,0,0.12)] font-['Open_Sans',sans-serif] text-[8px] text-[#6b7a80]">
      <div className="flex items-center gap-1 h-[23px] shrink-0 pt-1 pl-2 bg-[#e1e1e1]">
        <span className="size-[5px] rounded-full bg-[#b9b9b9]" />
        <span className="size-[5px] rounded-full bg-[#cacaca]" />
        <span className="size-[5px] rounded-full bg-[#b4b4b4]" />
      </div>
      <div className="flex flex-1 min-h-0">
        <MiniSidebar />
        <div className="flex-1 min-w-0">
          <div className="flex items-center justify-end gap-1 h-[34px] pr-[9px] pb-0.5 border-b-2 border-[#eceff2] font-['Liberation_Sans',sans-serif] text-[8px] text-black">
            {MINI_MENUS.map(({ label, icon: Icon }) => (
              <button key={label} className="flex items-center h-[22px] px-[5px] bg-white border border-[#d9dde1] rounded-xs whitespace-nowrap">
                <Icon className="size-2 mr-[5px] text-[#7b8b92]" />
                {label}
                <FaCaretDown className="size-[7px] ml-[5px] text-[#7b8b92]" />
              </button>
            ))}
            <button aria-label="Guide" className="flex items-center justify-center w-7 h-[21px] rounded-xs bg-[#58c322] text-white"><FaBook className="size-[9px]" /></button>
            <button className="flex items-center gap-1.5 h-[21px] px-2 rounded-xs bg-[#3f48b5] font-['Open_Sans',sans-serif] font-semibold text-white">
              <FaTachometerAlt className="size-[9px]" />Dashboard
            </button>
          </div>
          <div className="flex gap-[14px] pt-6 pl-[13px] pr-[14px]">
            <MiniOrderCard />
            <MiniScoreCards />
          </div>
        </div>
      </div>
    </div>
  );
}

export default function App() {
  return (
    <div className="relative h-screen min-w-[1280px] overflow-hidden bg-white pl-[26px] pr-[25px] pt-[368px] pb-[26px]">
      <MainWindow />
      <div className="absolute top-[15px] left-[690px] right-[77px] h-[620px]">
        <MiniWindow />
      </div>
    </div>
  );
}
